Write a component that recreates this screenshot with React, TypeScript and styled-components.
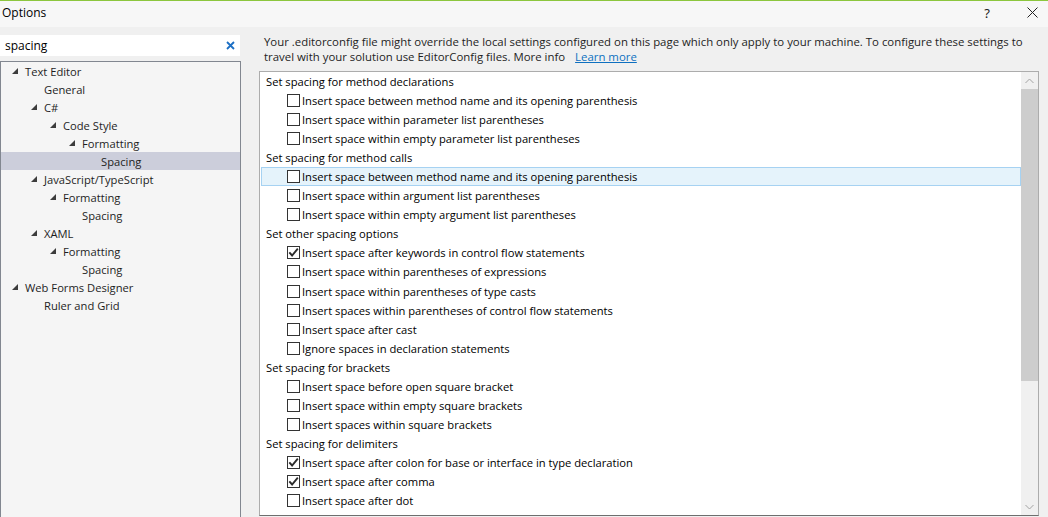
import React from "react";
import styled, { createGlobalStyle } from "styled-components";

const GlobalStyle = createGlobalStyle`
  html, body { margin: 0; padding: 0; background: #f0f0f0; }
  body { font-family: "Open Sans", "Noto Sans", sans-serif; font-size: 11.2px; color: #1e1e1e; }
  * { box-sizing: border-box; }
`;

const Window = styled.div`
  width: 1048px;
  height: 517px;
  display: flex;
  flex-direction: column;
  overflow: hidden;
  background: #f0f0f0;
`;

const TitleBar = styled.div`
  height: 27px;
  flex: none;
  border-top: 1px solid #8cc63e;
  background: #f7f7f7;
  display: flex;
  align-items: center;
  padding-left: 2px;
`;

const Title = styled.div`
  font-size: 12px;
  color: #000;
  flex: 1;
  margin-top: -3px;
`;

const TitleButton = styled.div`
  width: 32px;
  height: 26px;
  margin-left: 13px;
  display: flex;
  align-items: center;
  justify-content: center;
  font-family: "Noto Sans", sans-serif;
  font-size: 13px;
  color: #222;
  margin-top: -3px;
`;

const Body = styled.div`
  flex: 1;
  display: flex;
  min-height: 0;
`;

const LeftColumn = styled.div`
  width: 241px;
  flex: none;
  display: flex;
  flex-direction: column;
  padding-top: 8px;
`;

const SearchBox = styled.div`
  height: 21px;
  background: #fff;
  display: flex;
  align-items: center;
  padding: 0 5px 0 5px;
  margin-right: 1px;
`;

const SearchText = styled.div`
  flex: 1;
  font-size: 12px;
  color: #000;
`;

const Tree = styled.div`
  margin-top: 5px;
  flex: 1;
  margin-bottom: -2px;
  border: 1px solid #828790;
  background: #f5f5f5;
`;

const TreeRow = styled.div<{ $level: number; $selected?: boolean }>`
  height: 18px;
  display: flex;
  align-items: center;
  padding-left: ${(p) => 11 + p.$level * 19}px;
  background: ${(p) => (p.$selected ? "#cccedb" : "transparent")};
  color: #1e1e1e;
  white-space: nowrap;
`;

const Expander = styled.span`
  width: 13px;
  flex: none;
  display: flex;
  align-items: center;
`;

const RightColumn = styled.div`
  flex: 1;
  display: flex;
  flex-direction: column;
  padding: 8px 9px 0 18px;
  min-width: 0;
`;

const Info = styled.div`
  padding-left: 5px;
  line-height: 14.5px;
  height: 36px;
  font-size: 11.4px;
  color: #1e1e1e;
`;

const Link = styled.span`
  color: #0e70c0;
  text-decoration: underline;
  margin-left: 10px;
`;

const ListBox = styled.div`
  height: 445px;
  border: 1px solid #acacac;
  border-bottom-color: #6e6e6e;
  background: #fff;
  display: flex;
`;

const ListContent = styled.div`
  flex: 1;
  min-width: 0;
`;

const GroupHeader = styled.div`
  height: 19.06px;
  display: flex;
  align-items: center;
  padding-left: 6px;
  color: #000;
  white-space: nowrap;
`;

const OptionRow = styled.div<{ $hover?: boolean }>`
  height: 19.06px;
  display: flex;
  align-items: center;
  padding-left: ${(p) => (p.$hover ? 25 : 27)}px;
  margin-left: ${(p) => (p.$hover ? 1 : 0)}px;
  border: ${(p) => (p.$hover ? "1px solid #a6d2f2" : "none")};
  background: ${(p) => (p.$hover ? "#e5f3fb" : "transparent")};
  color: #000;
  white-space: nowrap;
`;

const Box = styled.span`
  width: 13px;
  height: 13px;
  flex: none;
  border: 1px solid #333;
  background: #fff;
  margin-right: 2px;
  display: flex;
  align-items: center;
  justify-content: center;
`;

const ScrollBar = styled.div`
  width: 17px;
  flex: none;
  background: #f0f0f0;
  display: flex;
  flex-direction: column;
`;

const ScrollArrow = styled.div`
  height: 17px;
  flex: none;
  display: flex;
  align-items: center;
  justify-content: center;
`;

const Thumb = styled.div`
  height: 292px;
  flex: none;
  background: #cdcdcd;
`;

const Track = styled.div`
  flex: 1;
`;

const TreeArrow = () => (
  <svg width="6" height="6" viewBox="0 0 6 6">
    <polygon points="6,0 6,6 0,6" fill="#3c3c3c" />
  </svg>
);

const CheckMark = () => (
  <svg width="11" height="11" viewBox="0 0 11 11">
    <path d="M1.3 5.4 L4.1 8.5 L9.8 1.6" fill="none" stroke="#2b2b2b" strokeWidth="1.9" />
  </svg>
);

const Chevron = ({ up }: { up: boolean }) => (
  <svg width="9" height="6" viewBox="0 0 9 6">
    <path d={up ? "M0.5 5 L4.5 1 L8.5 5" : "M0.5 1 L4.5 5 L8.5 1"} fill="none" stroke="#a3a3a3" strokeWidth="1" />
  </svg>
);

type TreeItem = { label: string; level: number; expanded?: boolean; selected?: boolean };

const treeItems: TreeItem[] = [
  { label: "Text Editor", level: 0, expanded: true },
  { label: "General", level: 1 },
  { label: "C#", level: 1, expanded: true },
  { label: "Code Style", level: 2, expanded: true },
  { label: "Formatting", level: 3, expanded: true },
  { label: "Spacing", level: 4, selected: true },
  { label: "JavaScript/TypeScript", level: 1, expanded: true },
  { label: "Formatting", level: 2, expanded: true },
  { label: "Spacing", level: 3 },
  { label: "XAML", level: 1, expanded: true },
  { label: "Formatting", level: 2, expanded: true },
  { label: "Spacing", level: 3 },
  { label: "Web Forms Designer", level: 0, expanded: true },
  { label: "Ruler and Grid", level: 1 },
];

type Group = { title: string; options: { label: string; checked?: boolean; hover?: boolean }[] };

const groups: Group[] = [
  {
    title: "Set spacing for method declarations",
    options: [
      { label: "Insert space between method name and its opening parenthesis" },
      { label: "Insert space within parameter list parentheses" },
      { label: "Insert space within empty parameter list parentheses" },
    ],
  },
  {
    title: "Set spacing for method calls",
    options: [
      { label: "Insert space between method name and its opening parenthesis", hover: true },
      { label: "Insert space within argument list parentheses" },
      { label: "Insert space within empty argument list parentheses" },
    ],
  },
  {
    title: "Set other spacing options",
    options: [
      { label: "Insert space after keywords in control flow statements", checked: true },
      { label: "Insert space within parentheses of expressions" },
      { label: "Insert space within parentheses of type casts" },
      { label: "Insert spaces within parentheses of control flow statements" },
      { label: "Insert space after cast" },
      { label: "Ignore spaces in declaration statements" },
    ],
  },
  {
    title: "Set spacing for brackets",
    options: [
      { label: "Insert space before open square bracket" },
      { label: "Insert space within empty square brackets" },
      { label: "Insert spaces within square brackets" },
    ],
  },
  {
    title: "Set spacing for delimiters",
    options: [
      { label: "Insert space after colon for base or interface in type declaration", checked: true },
      { label: "Insert space after comma", checked: true },
      { label: "Insert space after dot" },
    ],
  },
];

export default function App() {
  return (
    <Window>
      <GlobalStyle />
      <TitleBar>
        <Title>Options</Title>
        <TitleButton>?</TitleButton>
        <TitleButton>
          <svg width="11" height="11" viewBox="0 0 11 11">
            <path d="M0.5 0.5 L10.5 10.5 M10.5 0.5 L0.5 10.5" stroke="#222" strokeWidth="1" />
          </svg>
        </TitleButton>
      </TitleBar>
      <Body>
        <LeftColumn>
          <SearchBox>
            <SearchText>spacing</SearchText>
            <svg width="9" height="9" viewBox="0 0 9 9">
              <path d="M1 1 L8 8 M8 1 L1 8" stroke="#1c6fc4" strokeWidth="1.8" />
            </svg>
          </SearchBox>
          <Tree>
            {treeItems.map((t, i) => (
              <TreeRow key={i} $level={t.level} $selected={t.selected}>
                <Expander>{t.expanded ? <TreeArrow /> : null}</Expander>
                {t.label}
              </TreeRow>
            ))}
          </Tree>
        </LeftColumn>
        <RightColumn>
          <Info>
            Your .editorconfig file might override the local settings configured on this page which only apply to your
            machine. To configure these settings to travel with your solution use EditorConfig files. More info
            <Link>Learn more</Link>
          </Info>
          <ListBox>
            <ListContent>
              {groups.map((g) => (
                <React.Fragment key={g.title}>
                  <GroupHeader>{g.title}</GroupHeader>
                  {g.options.map((o, i) => (
                    <OptionRow key={i} $hover={o.hover}>
                      <Box>{o.checked ? <CheckMark /> : null}</Box>
                      {o.label}
                    </OptionRow>
                  ))}
                </React.Fragment>
              ))}
            </ListContent>
            <ScrollBar>
              <ScrollArrow>
                <Chevron up />
              </ScrollArrow>
              <Thumb />
              <Track />
              <ScrollArrow>
                <Chevron up={false} />
              </ScrollArrow>
            </ScrollBar>
          </ListBox>
        </RightColumn>
      </Body>
    </Window>
  );
}
